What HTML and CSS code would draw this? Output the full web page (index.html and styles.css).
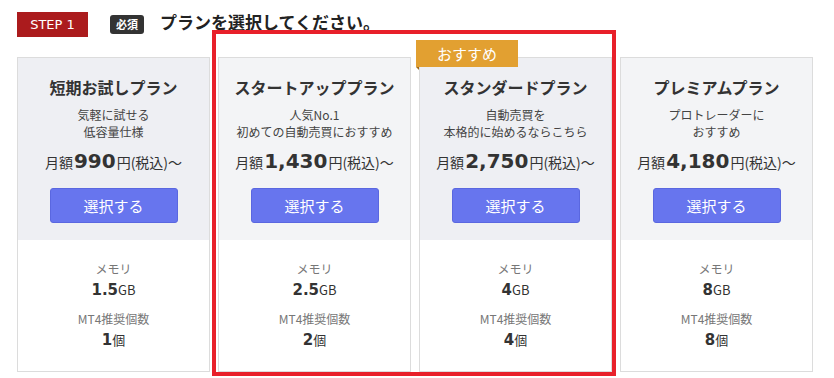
FILE: index.html
```html
<!DOCTYPE html>
<html lang="ja">
<head>
  <meta charset="UTF-8">
  <meta name="viewport" content="width=device-width, initial-scale=1.0">
  <title>プラン選択</title>
  <link rel="stylesheet" href="styles.css">
</head>
<body>
  <div class="page">
    <div class="step-head">
      <span class="step">STEP 1</span>
      <span class="must">必須</span>
      <h1>プランを選択してください。</h1>
    </div>

    <div class="plans">
      <div class="plan">
        <div class="plan-top">
          <h2>短期お試しプラン</h2>
          <p class="desc">気軽に試せる<br>低容量仕様</p>
          <p class="price">月額<b>990</b>円(税込)〜</p>
          <button class="select">選択する</button>
        </div>
        <div class="plan-spec">
          <p class="spec-label">メモリ</p>
          <p class="spec-value"><b>1.5</b>GB</p>
          <p class="spec-label gap">MT4推奨個数</p>
          <p class="spec-value"><b>1</b>個</p>
        </div>
      </div>

      <div class="plan">
        <div class="plan-top">
          <h2>スタートアッププラン</h2>
          <p class="desc">人気No.1<br>初めての自動売買におすすめ</p>
          <p class="price">月額<b>1,430</b>円(税込)〜</p>
          <button class="select">選択する</button>
        </div>
        <div class="plan-spec">
          <p class="spec-label">メモリ</p>
          <p class="spec-value"><b>2.5</b>GB</p>
          <p class="spec-label gap">MT4推奨個数</p>
          <p class="spec-value"><b>2</b>個</p>
        </div>
      </div>

      <div class="plan">
        <span class="ribbon">おすすめ</span>
        <div class="plan-top">
          <h2>スタンダードプラン</h2>
          <p class="desc">自動売買を<br>本格的に始めるならこちら</p>
          <p class="price">月額<b>2,750</b>円(税込)〜</p>
          <button class="select">選択する</button>
        </div>
        <div class="plan-spec">
          <p class="spec-label">メモリ</p>
          <p class="spec-value"><b>4</b>GB</p>
          <p class="spec-label gap">MT4推奨個数</p>
          <p class="spec-value"><b>4</b>個</p>
        </div>
      </div>

      <div class="plan">
        <div class="plan-top">
          <h2>プレミアムプラン</h2>
          <p class="desc">プロトレーダーに<br>おすすめ</p>
          <p class="price">月額<b>4,180</b>円(税込)〜</p>
          <button class="select">選択する</button>
        </div>
        <div class="plan-spec">
          <p class="spec-label">メモリ</p>
          <p class="spec-value"><b>8</b>GB</p>
          <p class="spec-label gap">MT4推奨個数</p>
          <p class="spec-value"><b>8</b>個</p>
        </div>
      </div>
    </div>

    <div class="highlight"></div>
  </div>
</body>
</html>
```

FILE: styles.css
```css
* {
  box-sizing: border-box;
}
html, body {
  height: 378px;
  overflow: hidden;
}
body {
  margin: 0;
  background: #fff;
  color: #333;
  font-family: "DejaVu Sans", "Noto Sans CJK JP", sans-serif;
}
p, h1, h2 {
  margin: 0;
}
.page {
  position: relative;
  height: 378px;
  padding: 12px 0 0 17px;
}
.step-head {
  display: flex;
  align-items: center;
  height: 25px;
}
.step {
  width: 71px;
  height: 25px;
  line-height: 25px;
  text-align: center;
  background: #ab1b1d;
  color: #fff;
  font-size: 13px;
}
.must {
  margin-left: 22px;
  width: 34px;
  height: 19px;
  line-height: 19px;
  text-align: center;
  background: #333;
  color: #fff;
  border-radius: 3px;
  font-size: 11px;
  font-weight: bold;
  font-family: "Noto Sans CJK JP", sans-serif;
}
h1 {
  margin-left: 16px;
  font-size: 17px;
  font-family: "Noto Sans CJK JP", sans-serif;
  line-height: 22px;
  margin-top: -6px;
  color: #222;
}
.plans {
  display: flex;
  align-items: flex-start;
  gap: 8px;
  margin-top: 20px;
}
.plan {
  position: relative;
  display: flex;
  flex-direction: column;
  width: 193px;
  height: 315px;
  border: 1px solid #dcdcdc;
  text-align: center;
  font-family: "Noto Sans CJK JP", sans-serif;
}
.plan-top {
  height: 182px;
  background: #eeeff3;
  padding-top: 17px;
  display: flex;
  flex-direction: column;
  align-items: center;
}
.plan:nth-child(even) .plan-top {
  background: #f3f4f6;
}
h2 {
  font-size: 16px;
  line-height: 24px;
  height: 24px;
  font-weight: bold;
  color: #333;
}
.desc {
  margin-top: 7px;
  font-size: 12px;
  line-height: 17px;
  height: 34px;
  color: #444;
}
.price {
  margin-top: 9px;
  font-size: 14px;
  line-height: 26px;
  height: 26px;
  color: #333;
}
.price b {
  font-family: "DejaVu Sans", sans-serif;
  font-size: 20px;
  line-height: 1;
  margin: 0 1px;
}
.select {
  margin-top: 13px;
  width: 128px;
  height: 35px;
  background: #6775ee;
  border: 1px solid #5a67e0;
  border-radius: 3px;
  color: #fff;
  font-size: 15px;
  font-family: "Noto Sans CJK JP", sans-serif;
}
.plan-spec {
  flex: 1;
  background: #fff;
  padding-top: 20px;
}
.spec-label {
  font-size: 12px;
  line-height: 18px;
  height: 18px;
  color: #777;
}
.spec-label.gap {
  margin-top: 9px;
}
.spec-value {
  margin-top: 1px;
  font-size: 13px;
  line-height: 22px;
  height: 22px;
  color: #333;
}
.spec-value b {
  font-family: "DejaVu Sans", sans-serif;
  font-size: 15px;
  line-height: 1;
}
.ribbon {
  position: absolute;
  left: -4px;
  top: -18px;
  width: 102px;
  height: 27px;
  line-height: 27px;
  background: #e2a031;
  color: #fff;
  font-size: 15px;
}
.ribbon::after {
  content: "";
  position: absolute;
  left: 0;
  bottom: -3px;
  border-top: 3px solid #9c6a1c;
  border-left: 3px solid transparent;
}
.highlight {
  position: absolute;
  left: 212px;
  top: 30px;
  width: 404px;
  height: 346px;
  border: 4px solid #e8202a;
  pointer-events: none;
}
```
